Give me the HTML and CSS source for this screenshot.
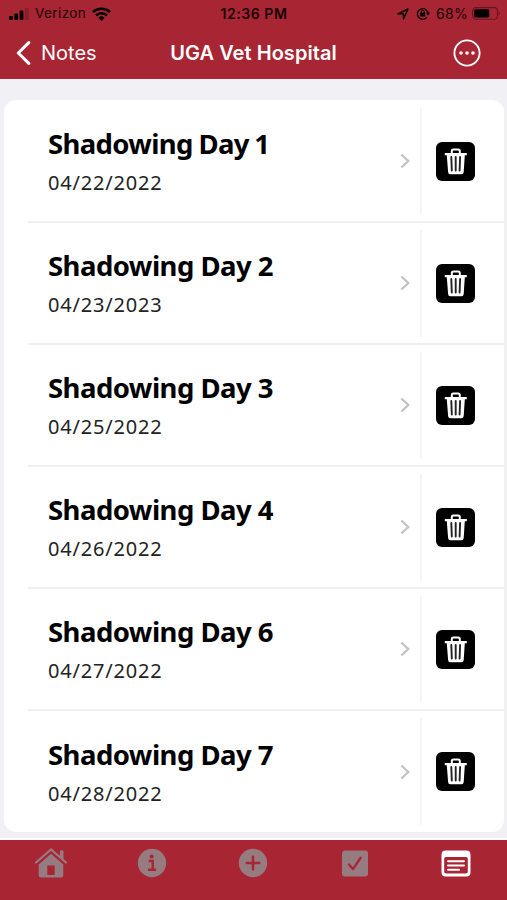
FILE: index.html
```html
<!DOCTYPE html>
<html lang="en">
<head>
<meta charset="utf-8">
<title>UGA Vet Hospital</title>
<link rel="stylesheet" href="styles.css">
</head>
<body>
<svg class="defs" aria-hidden="true">
  <symbol id="chevron" viewBox="0 0 10 16"><path d="M1.3 1.5 8.3 8l-7 6.500" fill="none" stroke="#c2c2c4" stroke-width="2.200"/></symbol>
  <symbol id="trash" viewBox="0 0 39 39">
    <path d="M15.800 11V9.200q0-1.600 1.600-1.600h4.800q1.600 0 1.600 1.600V11" fill="none" stroke="#fff" stroke-width="2"/>
    <path d="M8.800 11h22v2.200h-2L27.700 30q-.2 2.200-2.200 2.200H14.300q-2 0-2.200-2.200l-1.300-16.800h-2z" fill="#fff"/>
    <path d="M15.300 15l.5 13.500M19.700 15v13.500M24.100 15l-.5 13.500" fill="none" stroke="#222" stroke-width="1.900" stroke-linecap="round"/>
  </symbol>
</svg>
<div class="app">
  <header class="top">
    <div class="status">
      <div class="status-left">
        <svg width="20" height="12" viewBox="0 0 20 12"><rect y="8" width="3.8" height="4" rx="1"/><rect x="5.3" y="5.5" width="3.8" height="6.5" rx="1"/><rect x="10.6" y="2.5" width="3.8" height="9.5" rx="1"/><rect x="15.9" width="3.8" height="12" rx="1" opacity=".18"/></svg>
        <span class="carrier">Verizon</span>
        <svg class="wifi" width="19" height="14" viewBox="0 0 19 14"><path d="M1 5.2a12.3 12.3 0 0 1 17 0M4 8.5a8 8 0 0 1 11 0" fill="none" stroke="#000" stroke-width="2.5"/><path d="M6.4 10.8a4.5 4.5 0 0 1 6.2 0L9.5 14z"/></svg>
      </div>
      <span class="clock">12:36 PM</span>
      <div class="status-right">
        <svg width="12" height="12" viewBox="0 0 12 12"><path d="M1 5.8 11 1 6.5 11V5.8z" fill="none" stroke="#000" stroke-width="1.4" stroke-linejoin="round"/></svg>
        <svg class="lock" width="14" height="13" viewBox="0 0 14 13"><path d="M10.800 10.400A5.300 5.300 0 1 1 12 7.400" fill="none" stroke="#000" stroke-width="1.3"/><path d="M10 5.500h4l-2 3z"/><rect x="4.200" y="5.800" width="5" height="3.700" rx=".6"/><path d="M5.200 6V4.800a1.500 1.500 0 0 1 3 0V6" fill="none" stroke="#000"/></svg>
        <span class="percent">68%</span>
        <svg width="29" height="13" viewBox="0 0 29 13"><rect x=".6" y=".6" width="24.8" height="11.6" rx="3.2" fill="none" stroke="#000" stroke-opacity=".4" stroke-width="1.1"/><rect x="2.2" y="2.2" width="15" height="8.4" rx="1.3"/><path d="M26.8 4.4q2 2 0 4z" opacity=".45"/></svg>
      </div>
    </div>
    <nav class="nav">
      <a class="back"><svg width="15" height="24" viewBox="0 0 15 24"><path d="M12.8 1.6 2.3 12l10.5 10.4" fill="none" stroke="#fff" stroke-width="3" stroke-linecap="round" stroke-linejoin="round"/></svg><span>Notes</span></a>
      <h1>UGA Vet Hospital</h1>
      <svg class="more" width="28" height="28" viewBox="0 0 28 28"><circle cx="14" cy="14" r="12.6" fill="none" stroke="#fff" stroke-width="1.9"/><g fill="#fff"><circle cx="8" cy="14" r="1.8"/><circle cx="14" cy="14" r="1.8"/><circle cx="20" cy="14" r="1.8"/></g></svg>
    </nav>
  </header>
  <main>
    <ul class="notes">
      <li><div class="entry"><h2 class="narrow">Shadowing Day 1</h2><p>04/22/2022</p></div><svg class="chevron"><use href="#chevron"/></svg><div class="action"><button aria-label="Delete"><svg><use href="#trash"/></svg></button></div></li>
      <li><div class="entry"><h2>Shadowing Day 2</h2><p>04/23/2023</p></div><svg class="chevron"><use href="#chevron"/></svg><div class="action"><button aria-label="Delete"><svg><use href="#trash"/></svg></button></div></li>
      <li><div class="entry"><h2>Shadowing Day 3</h2><p>04/25/2022</p></div><svg class="chevron"><use href="#chevron"/></svg><div class="action"><button aria-label="Delete"><svg><use href="#trash"/></svg></button></div></li>
      <li><div class="entry"><h2>Shadowing Day 4</h2><p>04/26/2022</p></div><svg class="chevron"><use href="#chevron"/></svg><div class="action"><button aria-label="Delete"><svg><use href="#trash"/></svg></button></div></li>
      <li><div class="entry"><h2>Shadowing Day 6</h2><p>04/27/2022</p></div><svg class="chevron"><use href="#chevron"/></svg><div class="action"><button aria-label="Delete"><svg><use href="#trash"/></svg></button></div></li>
      <li><div class="entry"><h2>Shadowing Day 7</h2><p>04/28/2022</p></div><svg class="chevron"><use href="#chevron"/></svg><div class="action"><button aria-label="Delete"><svg><use href="#trash"/></svg></button></div></li>
    </ul>
  </main>
  <footer class="tabs">
    <svg viewBox="0 0 34 34"><path d="M2 16.500 17 3.500l15 13" fill="none" stroke="#967b80" stroke-width="2.200" stroke-linecap="round"/><path d="M26 4.500h3.500v9L26 10.300z" fill="#967b80"/><path fill-rule="evenodd" d="M17 7.700 29.300 18.500V29q0 2.500-2.500 2.500H7.200q-2.500 0-2.500-2.500V18.500zM13.300 19.500V29h7.400v-9.500z" fill="#967b80"/></svg>
    <svg viewBox="0 0 34 34"><circle cx="17" cy="17" r="14.200" fill="#967b80"/><circle cx="16.600" cy="10.400" r="2" fill="#a82533"/><path d="M13.700 15h4v8.500M13 23.800h8" fill="none" stroke="#a82533" stroke-width="2.400"/></svg>
    <svg viewBox="0 0 34 34"><circle cx="17" cy="17" r="14.200" fill="#967b80"/><path d="M10.800 17h12.400M17 10.800v12.400" fill="none" stroke="#a82533" stroke-width="2.500" stroke-linecap="round"/></svg>
    <svg viewBox="0 0 34 34"><rect x="4" y="4.500" width="26" height="26" rx="3" fill="#967b80"/><path d="m11 18.500 4 4.700 7.700-11.500" fill="none" stroke="#a82533" stroke-width="2.300" stroke-linecap="round" stroke-linejoin="round"/></svg>
    <svg viewBox="0 0 34 34"><path fill-rule="evenodd" d="M6.500 4.500h21q4 0 4 4v18q0 4-4 4h-21q-4 0-4-4v-18q0-4 4-4zM7 11q-1.800 0-1.800 1.800V25.700q0 1.800 1.800 1.800h20q1.800 0 1.800-1.800V12.800Q28.800 11 27 11z" fill="#fff"/><path d="M9 15.300h16M9 19.500h16M9 23.700h11" fill="none" stroke="#fff" stroke-width="2" stroke-linecap="round"/></svg>
  </footer>
</div>
</body>
</html>
```
FILE: styles.css
```css
* { box-sizing: border-box; }
body, h1, h2, p, ul { margin: 0; padding: 0; }
svg { display: block; flex: none; }
body { background: #f0f0f5; font-family: Inter, "Liberation Sans", sans-serif; }
.defs { display: none; }
.app { width: 507px; height: 900px; display: flex; flex-direction: column; overflow: hidden; }

.top { height: 79px; background: #a82533; flex: none; }
.status { height: 27px; display: grid; grid-template-columns: 1fr auto 1fr; align-items: center; padding: 0 6px 0 9px; font-size: 13.5px; line-height: 27px; color: #180306; }
.status-left, .status-right { display: flex; align-items: center; }
.carrier { margin-left: 6px; width: 51px; letter-spacing: .4px; white-space: nowrap; }
.wifi { margin-left: 6px; }
.clock { font-size: 14px; font-weight: 600; letter-spacing: .55px; margin-right: 2px; }
.status-right { justify-content: flex-end; }
.lock { margin-left: 7px; }
.percent { margin: 0 4px 0 6px; font-size: 14px; letter-spacing: .3px; }
.nav { height: 52px; display: grid; grid-template-columns: 1fr auto 1fr; align-items: center; padding: 0 26px 0 16px; color: #fff; }
.back { display: flex; align-items: center; gap: 10px; font-size: 20px; line-height: 24px; }
.nav h1 { font-size: 20px; font-weight: 600; line-height: 24px; letter-spacing: .05px; margin-left: 10px; }
.more { justify-self: end; }

main { flex: 1; padding: 21px 3px 0 4px; }
.notes { list-style: none; height: 732px; padding-top: 1px; background: #fff; border-radius: 12px; display: grid; grid-template-rows: repeat(6, 122.1px); }
.notes li { display: flex; align-items: center; margin-left: 24px; padding-left: 20px; border-bottom: 2px solid #f0f0f2; }
.notes li:last-child { border-bottom-color: transparent; }
.entry { flex: 1; font-family: "Noto Sans", sans-serif; white-space: nowrap; }
.entry h2 { font-size: 27.5px; font-weight: 700; line-height: 38px; letter-spacing: -.53px; color: #000; }
.entry h2.narrow { letter-spacing: -.63px; word-spacing: -1px; }
.entry p { font-size: 20px; line-height: 28px; margin-top: 6px; letter-spacing: .8px; color: #222; }
.chevron { width: 10px; height: 16px; margin-right: 10px; }
.action { width: 84px; height: 107px; border-left: 2px solid #f5f5f6; display: flex; align-items: center; padding-left: 14px; }
.action button { width: 39px; height: 39px; padding: 0; border: 0; border-radius: 6px; background: #000; }
.action svg { width: 39px; height: 39px; }

.tabs { height: 62px; flex: none; background: #a82533; border-top: 2px solid #fff; display: grid; grid-template-columns: repeat(5, 1fr); justify-items: center; align-items: start; padding-top: 6px; }
.tabs svg { width: 34px; height: 34px; }
```
